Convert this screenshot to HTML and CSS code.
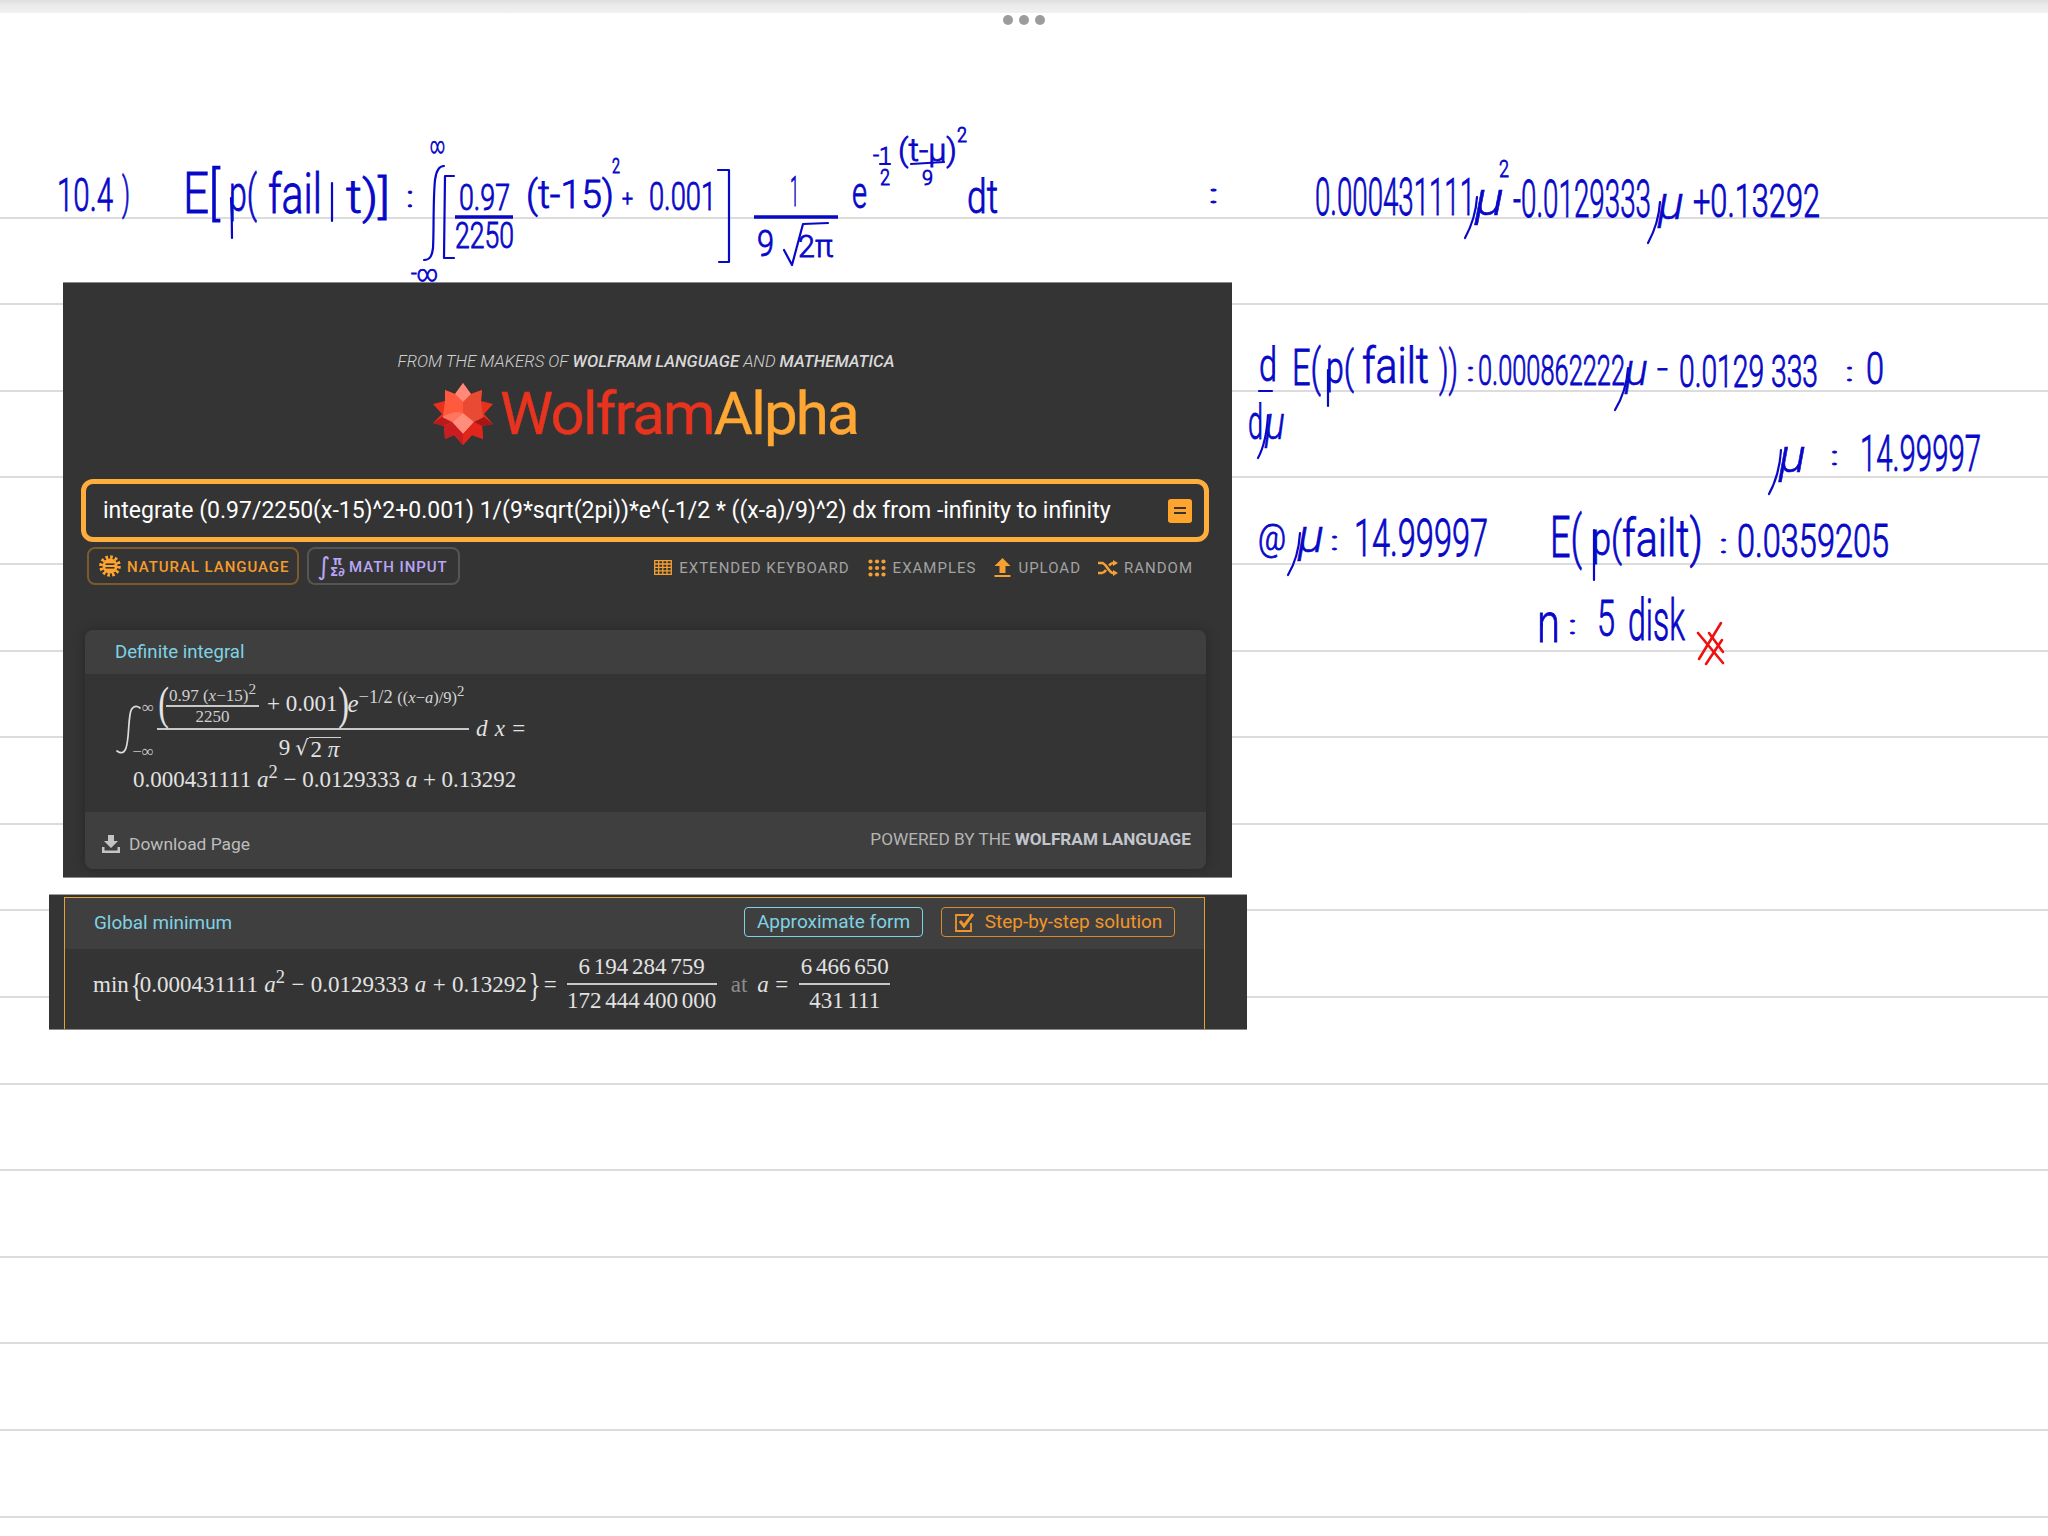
FILE: index.html
```html
<!DOCTYPE html>
<html lang="en">
<head>
<meta charset="utf-8">
<title>Notes</title>
<link rel="stylesheet" href="styles.css">
</head>
<body>
<main class="page">
  <div class="topbar"></div>
  <div class="dots"><i></i><i></i><i></i></div>
  <div class="rules">
    <div class="rule"></div><div class="rule"></div><div class="rule"></div><div class="rule"></div>
    <div class="rule"></div><div class="rule"></div><div class="rule"></div><div class="rule"></div>
    <div class="rule"></div><div class="rule"></div><div class="rule"></div><div class="rule"></div>
    <div class="rule"></div><div class="rule"></div><div class="rule"></div><div class="rule"></div>
  </div>

  <section class="shot shot-one">
    <p class="tagline">FROM THE MAKERS OF <b>WOLFRAM LANGUAGE</b> AND <b>MATHEMATICA</b></p>
    <div class="logo">
      <svg class="spikey" viewBox="-31 -31 62 62">
        <polygon fill="#e8301c" points="0,-31 8,-20 19,-24 18,-13 30,-10 21,0 30,10 19,12 20,25 9,21 0,31 -9,21 -18,25 -19,12 -30,9 -21,0 -30,-10 -18,-13 -18,-24 -8,-20"/>
        <polygon fill="#ff5a3e" points="-18,-24 -8,-20 0,-12 0,-1 -11,8 -19,12 -20,2 -18,-13"/>
        <polygon fill="#e84a32" points="19,-24 8,-20 0,-12 0,-1 11,8 19,12 20,2 18,-13"/>
        <polygon fill="#ff8a78" points="0,-31 -8,-20 0,-12 8,-20"/>
        <polygon fill="#ff8d7c" points="0,-1 -11,8 0,20 11,8"/>
        <polygon fill="#ff7560" points="-19,12 -11,8 0,-1 -8,-2 -20,2"/>
        <polygon fill="#c81e22" points="-19,12 -11,8 0,20 0,31 -9,21 -18,25"/>
        <polygon fill="#e0261a" points="19,12 11,8 0,20 0,31 9,21 20,25"/>
        <polygon fill="#b91a1c" points="-30,9 -19,12 -11,8 -21,3"/>
        <polygon fill="#a81518" points="30,10 19,12 11,8 21,3"/>
      </svg>
      <div class="wordmark"><span class="wm-red">Wolfram</span><span class="wm-orange">Alpha</span></div>
    </div>
    <div class="search">
      <span class="query">integrate (0.97/2250(x-15)^2+0.001) 1/(9*sqrt(2pi))*e^(-1/2 * ((x-a)/9)^2) dx from -infinity to infinity</span>
      <span class="go"><i></i><i></i></span>
    </div>
    <div class="toolbar">
      <div class="modes">
        <span class="mode mode-nl">
          <svg class="icon-sun" viewBox="-11 -11 22 22">
            <circle r="7.5" fill="#ffa52e"/>
            <circle r="9" fill="none" stroke="#ffa52e" stroke-width="3.6" stroke-dasharray="2.6 2.1"/>
            <rect x="-4.5" y="-2.6" width="9" height="1.6" fill="#343434"/>
            <rect x="-4.5" y="1" width="9" height="1.6" fill="#343434"/>
          </svg>
          NATURAL LANGUAGE
        </span>
        <span class="mode mode-math">
          <span class="math-icon"><span class="mi-int">∫</span><span class="mi-stack"><span>π</span><span>Σ∂</span></span></span>
          MATH INPUT
        </span>
      </div>
      <nav class="links">
        <span class="link link-kb">
          <svg class="ic" width="18" height="15" viewBox="0 0 18 15"><path fill="none" stroke="#f5a033" stroke-width="1.3" d="M.7.7h16.6v13.6H.7zM.7 4h16.6M.7 7.4h16.6M.7 10.8h16.6M4.7.7v13.6M8.8.7v13.6M13 .7v13.6"/></svg>
          EXTENDED KEYBOARD
        </span>
        <span class="link link-ex">
          <svg class="ic" width="18" height="18" viewBox="0 0 18 18" fill="#f5a033"><circle cx="2.5" cy="2.5" r="2.1"/><circle cx="9" cy="2.5" r="2.1"/><circle cx="15.5" cy="2.5" r="2.1"/><circle cx="2.5" cy="9" r="2.1"/><circle cx="9" cy="9" r="2.1"/><circle cx="15.5" cy="9" r="2.1"/><circle cx="2.5" cy="15.5" r="2.1"/><circle cx="9" cy="15.5" r="2.1"/><circle cx="15.5" cy="15.5" r="2.1"/></svg>
          EXAMPLES
        </span>
        <span class="link link-up">
          <svg class="ic" width="17" height="19" viewBox="0 0 17 19" fill="#f5a033"><path d="M8.5 0 16.5 8H11.5V15H5.5V8H.5z"/><rect x="0.5" y="17" width="16" height="2"/></svg>
          UPLOAD
        </span>
        <span class="link link-rnd">
          <svg class="ic" width="20" height="16" viewBox="0 0 20 16"><path fill="none" stroke="#f5a033" stroke-width="2.6" d="M0 3h4c4 0 7 10 11 10h2M0 13h4c1.600 0 3-1.500 4-3M11 5.500C12.500 4 13.500 3 15 3h2"/><path fill="#f5a033" d="M15 0l5 3-5 3zM15 10l5 3-5 3z"/></svg>
          RANDOM
        </span>
      </nav>
    </div>

    <article class="pod">
      <header class="pod-head">Definite integral</header>
      <div class="pod-body">
        <div class="integral-row math">
          <svg class="int-sign" width="26" height="50" viewBox="0 0 26 50"><path fill="none" stroke="#dcdcdc" stroke-width="1.700" stroke-linecap="round" d="M25 3c-4-3-9-2-10 7-2 12-1 24-4 33-1.500 5-5 6-9 3"/></svg>
          <span class="limits"><span>∞</span><span>−∞</span></span>
          <span class="frac frac-main">
            <span class="num num-main">
              <span class="paren">(</span>
              <span class="frac frac-small"><span class="num"><span>0.97 (<em>x</em>−15)<sup>2</sup></span></span><span class="den">2250</span></span>
              <span class="plus">+ 0.001</span>
              <span class="paren">)</span>
              <em class="e">e</em><span class="exp">−1/2 <small>((<em>x</em>−<em>a</em>)/9)</small><sup>2</sup></span>
            </span>
            <span class="den den-main">9 <span class="root">√</span><span class="radicand">2 <em>π</em></span></span>
          </span>
          <span class="dx"><em>d x</em> =</span>
        </div>
        <div class="result math">0.000431111 <em>a</em><sup>2</sup> − 0.0129333 <em>a</em> + 0.13292</div>
      </div>
      <footer class="pod-foot">
        <span class="download">
          <svg width="18" height="18" viewBox="0 0 18 18" fill="#c4c4c4"><path d="M6 0h6v6h4L9 13 2 6h4zM0 12h2.500v3.500h13V12H18v6H0z"/></svg>
          Download Page
        </span>
        <span class="powered">POWERED BY THE <b>WOLFRAM LANGUAGE</b></span>
      </footer>
    </article>
  </section>

  <section class="shot shot-two">
    <div class="frame">
      <header class="frame-head">
        <span class="frame-title">Global minimum</span>
        <span class="btn btn-cyan">Approximate form</span>
        <span class="btn btn-orange">
          <svg width="22" height="22" viewBox="0 0 22 22"><path fill="none" stroke="#f0962a" stroke-width="1.800" d="M17 12v8H2V4h13"/><path fill="none" stroke="#f0962a" stroke-width="3" d="M6 10l4 5 9-12"/></svg>
          Step-by-step solution
        </span>
      </header>
      <div class="frame-body math">
        <span>min</span><span class="brace">{</span><span>0.000431111 <em>a</em><sup>2</sup> − 0.0129333 <em>a</em> + 0.13292</span><span class="brace">}</span>
        <span class="eq">=</span>
        <span class="frac frac-wide"><span class="num">6 194 284 759</span><span class="den">172 444 400 000</span></span>
        <span class="at">at</span>
        <span class="a-eq"><em>a</em> =</span>
        <span class="frac frac-narrow"><span class="num">6 466 650</span><span class="den">431 111</span></span>
      </div>
    </div>
  </section>

  <svg class="ink" width="2048" height="1536" viewBox="0 0 2048 1536">
    <!-- first line -->
    <text x="57" y="211" font-size="46" textLength="56" lengthAdjust="spacingAndGlyphs">10.4</text>
    <text x="122" y="209" font-size="44" textLength="8" lengthAdjust="spacingAndGlyphs">)</text>
    <text x="183" y="213" font-size="58" textLength="37" lengthAdjust="spacingAndGlyphs">E[</text>
    <text x="229" y="211" font-size="50" textLength="28" lengthAdjust="spacingAndGlyphs">p(</text>
    <text x="268" y="213" font-size="56" textLength="54" lengthAdjust="spacingAndGlyphs">fail</text>
    <text x="346" y="213" font-size="46" textLength="44" lengthAdjust="spacingAndGlyphs">t)]</text>
    <text x="406" y="207" font-size="30" textLength="8" lengthAdjust="spacingAndGlyphs">:</text>
    <text x="430" y="153" font-size="22" textLength="15" lengthAdjust="spacingAndGlyphs">∞</text>
    <text x="411" y="281" font-size="22" textLength="27" lengthAdjust="spacingAndGlyphs">-∞</text>
    <text x="459" y="210" font-size="36" textLength="51" lengthAdjust="spacingAndGlyphs">0.97</text>
    <text x="455" y="248" font-size="36" textLength="59" lengthAdjust="spacingAndGlyphs">2250</text>
    <text x="526" y="208" font-size="38" textLength="88" lengthAdjust="spacingAndGlyphs">(t-15)</text>
    <text x="612" y="173" font-size="20" textLength="8" lengthAdjust="spacingAndGlyphs">2</text>
    <text x="622" y="206" font-size="22" textLength="11" lengthAdjust="spacingAndGlyphs">+</text>
    <text x="649" y="210" font-size="38" textLength="67" lengthAdjust="spacingAndGlyphs">0.001</text>
    <text x="790" y="206" font-size="42" textLength="9" lengthAdjust="spacingAndGlyphs">1</text>
    <text x="757" y="256" font-size="36" textLength="17" lengthAdjust="spacingAndGlyphs">9</text>
    <text x="798" y="257" font-size="32" textLength="35" lengthAdjust="spacingAndGlyphs">2π</text>
    <text x="852" y="208" font-size="44" textLength="15" lengthAdjust="spacingAndGlyphs">e</text>
    <text x="873" y="163" font-size="22" textLength="18" lengthAdjust="spacingAndGlyphs">-1</text>
    <text x="880" y="185" font-size="22" textLength="10" lengthAdjust="spacingAndGlyphs">2</text>
    <text x="898" y="161" font-size="32" textLength="59" lengthAdjust="spacingAndGlyphs">(t-μ)</text>
    <text x="922" y="185" font-size="20" textLength="11" lengthAdjust="spacingAndGlyphs">9</text>
    <text x="957" y="142" font-size="20" textLength="10" lengthAdjust="spacingAndGlyphs">2</text>
    <text x="967" y="213" font-size="46" textLength="31" lengthAdjust="spacingAndGlyphs">dt</text>
    <!-- first line, result -->
    <text x="1208" y="203" font-size="26" textLength="11" lengthAdjust="spacingAndGlyphs">:</text>
    <text x="1315" y="215" font-size="52" textLength="160" lengthAdjust="spacingAndGlyphs">0.000431111</text>
    <text class="mu" x="1475" y="215" font-size="48" textLength="29" lengthAdjust="spacingAndGlyphs">μ</text>
    <text x="1499" y="177" font-size="24" textLength="10" lengthAdjust="spacingAndGlyphs">2</text>
    <text x="1513" y="217" font-size="52" textLength="138" lengthAdjust="spacingAndGlyphs">-0.0129333</text>
    <text class="mu" x="1658" y="219" font-size="46" textLength="26" lengthAdjust="spacingAndGlyphs">μ</text>
    <text x="1693" y="217" font-size="46" textLength="127" lengthAdjust="spacingAndGlyphs">+0.13292</text>
    <!-- derivative -->
    <text x="1259" y="381" font-size="46" textLength="18" lengthAdjust="spacingAndGlyphs">d</text>
    <text x="1248" y="439" font-size="48" textLength="15" lengthAdjust="spacingAndGlyphs">d</text>
    <text class="mu" x="1265" y="439" font-size="46" textLength="20" lengthAdjust="spacingAndGlyphs">μ</text>
    <text x="1292" y="385" font-size="50" textLength="29" lengthAdjust="spacingAndGlyphs">E(</text>
    <text x="1326" y="383" font-size="44" textLength="28" lengthAdjust="spacingAndGlyphs">p(</text>
    <text x="1362" y="383" font-size="50" textLength="67" lengthAdjust="spacingAndGlyphs">failt</text>
    <text x="1439" y="385" font-size="48" textLength="19" lengthAdjust="spacingAndGlyphs">))</text>
    <text x="1466" y="381" font-size="26" textLength="9" lengthAdjust="spacingAndGlyphs">:</text>
    <text x="1478" y="385" font-size="42" textLength="147" lengthAdjust="spacingAndGlyphs">0.000862222</text>
    <text class="mu" x="1625" y="385" font-size="44" textLength="23" lengthAdjust="spacingAndGlyphs">μ</text>
    <text x="1657" y="380" font-size="34" textLength="11" lengthAdjust="spacingAndGlyphs">-</text>
    <text x="1679" y="387" font-size="44" textLength="139" lengthAdjust="spacingAndGlyphs">0.0129 333</text>
    <text x="1845" y="381" font-size="26" textLength="9" lengthAdjust="spacingAndGlyphs">:</text>
    <text x="1866" y="384" font-size="44" textLength="18" lengthAdjust="spacingAndGlyphs">0</text>
    <!-- mu value -->
    <text class="mu" x="1779" y="472" font-size="48" textLength="27" lengthAdjust="spacingAndGlyphs">μ</text>
    <text x="1830" y="465" font-size="26" textLength="9" lengthAdjust="spacingAndGlyphs">:</text>
    <text x="1860" y="471" font-size="50" textLength="121" lengthAdjust="spacingAndGlyphs">14.99997</text>
    <!-- at mu -->
    <text x="1258" y="550" font-size="36" textLength="28" lengthAdjust="spacingAndGlyphs">@</text>
    <text class="mu" x="1298" y="552" font-size="46" textLength="26" lengthAdjust="spacingAndGlyphs">μ</text>
    <text x="1330" y="550" font-size="26" textLength="9" lengthAdjust="spacingAndGlyphs">:</text>
    <text x="1354" y="556" font-size="52" textLength="134" lengthAdjust="spacingAndGlyphs">14.99997</text>
    <text x="1550" y="557" font-size="58" textLength="32" lengthAdjust="spacingAndGlyphs">E(</text>
    <text x="1592" y="555" font-size="46" textLength="30" lengthAdjust="spacingAndGlyphs">p(</text>
    <text x="1622" y="556" font-size="52" textLength="81" lengthAdjust="spacingAndGlyphs">failt)</text>
    <text x="1719" y="553" font-size="26" textLength="9" lengthAdjust="spacingAndGlyphs">:</text>
    <text x="1737" y="557" font-size="46" textLength="152" lengthAdjust="spacingAndGlyphs">0.0359205</text>
    <!-- n -->
    <text x="1537" y="642" font-size="56" textLength="23" lengthAdjust="spacingAndGlyphs">n</text>
    <text x="1568" y="634" font-size="26" textLength="9" lengthAdjust="spacingAndGlyphs">:</text>
    <text x="1597" y="636" font-size="50" textLength="18" lengthAdjust="spacingAndGlyphs">5</text>
    <text x="1628" y="640" font-size="58" textLength="57" lengthAdjust="spacingAndGlyphs">disk</text>
    <!-- strokes that are not letters -->
    <g class="stroke">
      <path d="M444 166c-6 0-8 6-9 14-2 20-1 50-2 68-1 8-3 12-9 12"/>
      <path d="M454 176h-9l-1 82h10"/>
      <path d="M718 170h11v92h-10"/>
      <path d="M332 183v38"/>
      <path d="M231 198c1 20 1 20 1 40"/>
      <path d="M1259 391h13"/>
      <path d="M911 164l33-2"/>
      <path d="M880 164h10"/>
      <path d="M784 250l8 15 11-41 25-1"/>
      <path d="M1477 197c-1 16-6 30-12 41"/>
      <path d="M1660 202c-1 16-6 30-12 41"/>
      <path d="M1268 415c-1 16-4 32-10 43"/>
      <path d="M1628 368c-1 16-7 32-13 42"/>
      <path d="M1781 450c-1 16-6 33-12 44"/>
      <path d="M1300 533c-1 16-6 32-12 42"/>
      <path d="M1328 370v36"/>
      <path d="M1594 530v50"/>
    </g>
    <path class="bar" d="M455 217h58"/>
    <path class="bar" d="M754 217h84"/>
    <g class="red">
      <path d="M1721 623 1699 659"/>
      <path d="M1698 633 1723 663"/>
      <path d="M1709 633 1723 652"/>
      <path d="M1722 640 1706 664"/>
    </g>
  </svg>
</main>
</body>
</html>
```

FILE: styles.css
```css
* { box-sizing: border-box; }
html, body { margin: 0; padding: 0; background: #fff; }
.page {
  position: relative;
  width: 2048px;
  height: 1536px;
  overflow: hidden;
  background: #fff;
  font-family: Roboto, "Liberation Sans", sans-serif;
}
.topbar {
  height: 13px;
  background: linear-gradient(#dedede, #eaeaea 40%, #f1f1f1);
}
.dots {
  position: absolute;
  top: 15px;
  left: 1003px;
  display: flex;
  gap: 6px;
}
.dots i {
  width: 10px;
  height: 10px;
  border-radius: 50%;
  background: #9c9c9c;
}
.rules { padding-top: 119px; }
.rule {
  height: 86.6px;
  border-bottom: 2px solid #dcdcdc;
}

/* Pasted screenshots */
.shot {
  position: absolute;
  background: #343434;
  color: #e4e4e4;
}
.shot-one {
  left: 63px;
  top: 282px;
  width: 1169px;
  height: 596px;
  border-top: 1px solid #8a8a8a;
  border-bottom: 1px solid #8a8a8a;
  overflow: hidden;
}
.shot-two {
  left: 49px;
  top: 894px;
  width: 1198px;
  height: 136px;
  padding: 2px 42px 0 15px;
  border-top: 1px solid #a0a0a0;
  border-bottom: 1px solid #8a8a8a;
}

/* Header */
.tagline {
  margin: 67px 0 0;
  padding-right: 3px;
  height: 22px;
  line-height: 22px;
  text-align: center;
  font-size: 16.8px;
  font-style: italic;
  font-weight: 300;
  color: #d0d0d0;
}
.tagline b { font-weight: 500; color: #d8d8d8; }
.logo {
  margin: 11px 0 0 369px;
  height: 62px;
  display: flex;
  align-items: center;
  gap: 6px;
}
.spikey { width: 62px; height: 62px; flex: none; }
.wordmark {
  font-size: 60px;
  line-height: 62px;
  font-weight: 400;
  letter-spacing: -1.8px;
  -webkit-text-stroke: .4px currentColor;
}
.wm-red { color: #e8331f; }
.wm-orange { color: #ffa733; }

/* Search */
.search {
  margin: 34px 23px 0 18px;
  height: 63px;
  border: 5px solid #ffae3e;
  border-radius: 12px;
  display: flex;
  align-items: center;
  justify-content: space-between;
  padding: 0 12px 0 17px;
}
.query { font-size: 23px; color: #fff; white-space: nowrap; }
.go {
  width: 24px;
  height: 24px;
  border-radius: 3px;
  background: #ffa52e;
  display: flex;
  flex-direction: column;
  align-items: center;
  justify-content: center;
  gap: 3px;
}
.go i { width: 12px; height: 2px; background: #343434; }

/* Toolbar */
.toolbar {
  margin: 5px 39px 0 24px;
  height: 38px;
  display: flex;
  justify-content: space-between;
  align-items: center;
}
.modes { display: flex; gap: 8px; }
.mode {
  height: 38px;
  border-radius: 8px;
  border: 2px solid;
  display: flex;
  align-items: center;
  font-size: 15px;
  font-weight: 500;
  letter-spacing: .95px;
  white-space: nowrap;
}
.mode-nl {
  width: 212px;
  border-color: #7c5a2c;
  color: #f59d2c;
  padding: 2px 0 0 10px;
  gap: 6px;
}
.icon-sun { width: 22px; height: 22px; flex: none; position: relative; top: -1px; }
.mode-math {
  width: 153px;
  border-color: #555;
  color: #b9a6f7;
  padding: 1px 0 0 8px;
  gap: 5px;
}
.math-icon {
  display: flex;
  align-items: center;
  width: 27px;
  font-family: "DejaVu Sans", sans-serif;
  letter-spacing: 0;
  color: #b9a6f7;
}
.mi-int { font-size: 25px; line-height: 25px; }
.mi-stack {
  display: flex;
  flex-direction: column;
  align-items: center;
  font-size: 12px;
  line-height: 11px;
  font-weight: 700;
}
.links {
  display: flex;
  align-items: center;
  font-size: 15px;
  letter-spacing: 1px;
  color: #a2a2a2;
  white-space: nowrap;
  padding-top: 3px;
}
.link { display: flex; align-items: center; gap: 7px; }
.link-ex { margin-left: 18px; }
.link-up { margin-left: 18px; }
.link-rnd { margin-left: 17px; gap: 6px; }
.ic { flex: none; }

/* Pods */
.pod {
  margin: 45px 26px 0 22px;
  border-radius: 8px;
  overflow: hidden;
  box-shadow: 0 0 12px rgba(0, 0, 0, .25);
}
.pod-head {
  height: 44px;
  background: #3f3f3f;
  color: #7fd2e4;
  font-size: 18.6px;
  line-height: 45px;
  padding-left: 30px;
}
.pod-body {
  height: 138px;
  background: #343434;
  padding: 3px 0 0 30px;
}
.pod-foot {
  height: 57px;
  background: #3f3f3f;
  display: flex;
  justify-content: space-between;
  padding: 0 15px 0 17px;
  color: #bdbdbd;
}
.download {
  display: flex;
  align-items: center;
  gap: 9px;
  font-size: 17.4px;
  padding-top: 7px;
}
.powered {
  display: flex;
  align-items: center;
  gap: 4px;
  font-size: 17.2px;
  padding-bottom: 3px;
  color: #b4b4b4;
}
.powered b { font-weight: 700; color: #c2c6cc; }

/* Math */
.math {
  font-family: "Liberation Serif", serif;
  color: #e2e2e2;
  font-size: 23px;
  white-space: nowrap;
}
.math em { font-style: italic; }
.math sup { font-size: .8em; line-height: 0; }
.integral-row { display: flex; align-items: center; height: 86px; }
.int-sign {
  flex: none;
  margin: 20px -10px 0 0;
  overflow: visible;
}
.limits {
  display: flex;
  flex-direction: column;
  justify-content: space-between;
  align-items: flex-end;
  height: 62px;
  width: 23px;
  margin-top: 20px;
  font-size: 17px;
  line-height: 18px;
  color: #c8c8c8;
}
.frac {
  display: inline-flex;
  flex-direction: column;
  align-items: center;
}
.frac > .num {
  border-bottom: 2px solid #c8c8c8;
  width: 100%;
  display: flex;
  justify-content: center;
  align-items: center;
}
.frac > .den { display: flex; justify-content: center; }
.frac-main { width: 312px; margin: 3px 0 0 3px; }
.frac > .num-main { height: 50px; justify-content: flex-start; }
.paren {
  font-size: 46px;
  line-height: 46px;
  transform: scaleX(.7);
  width: 9px;
  text-align: center;
}
.frac-small {
  font-size: 17px;
  width: 93px;
  margin: 3px 0 0 0;
  line-height: 19px;
  color: #cfcfcf;
}
.frac-small sup { font-size: .9em; }
.plus { margin-left: 8px; }
.e { margin-left: 1px; font-size: 25px; }
.exp {
  font-size: 18.5px;
  align-self: flex-start;
  margin-top: 7px;
  color: #d4d4d4;
}
.exp small { font-size: 16.5px; }
.frac > .den-main {
  height: 33px;
  align-items: center;
  padding: 3px 6px 0 0;
  line-height: 30px;
}
.root { margin-left: 5px; font-family: "DejaVu Sans", sans-serif; font-size: 21px; }
.radicand {
  border-top: 1.500px solid #d0d0d0;
  line-height: 24px;
  height: 26px;
  margin-top: 3px;
  padding: 0 2px;
}
.dx { margin-left: 7px; margin-top: 18px; word-spacing: 1.5px; }
.result { margin-left: 18px; line-height: 34px; }

/* Second screenshot */
.frame {
  height: 100%;
  border: 1.500px solid #e8a030;
  border-bottom: 0;
}
.frame-head {
  height: 51px;
  background: #3f3f3f;
  display: flex;
  align-items: center;
  padding: 0 29px 0 28px;
}
.frame-title {
  color: #7fd2e4;
  font-size: 18.9px;
  margin: 0 auto 3px 1px;
}
.btn {
  height: 30px;
  border: 1px solid;
  border-radius: 4px;
  display: flex;
  align-items: center;
  justify-content: center;
  font-size: 19px;
  white-space: nowrap;
  position: relative;
  top: -2px;
}
.btn-cyan { width: 179px; color: #7fd2e4; border-color: #7fd2e4; margin-right: 18px; }
.btn-orange { width: 234px; color: #f0962a; border-color: #d98a2a; gap: 9px; }
.frame-body {
  display: flex;
  align-items: center;
  height: 80px;
  padding: 0 0 9px 28px;
  word-spacing: .6px;
}
.brace {
  font-size: 34px;
  line-height: 34px;
  font-weight: 300;
  transform: scaleX(.75);
  width: 11px;
  text-align: center;
}
.eq { margin: 0 10px 0 6px; }
.frac-wide { width: 150px; }
.frac-narrow { width: 91px; }
.frac-wide .num, .frac-narrow .num, .frac-wide .den, .frac-narrow .den {
  height: 34px;
  line-height: 32px;
  word-spacing: -2px;
}
.at { color: #8c8c8c; margin: 0 10px 0 14px; }
.a-eq { margin-right: 11px; }

/* Handwritten ink over the page */
.ink {
  position: absolute;
  left: 0;
  top: 0;
  pointer-events: none;
}
.ink text {
  font-family: Roboto, "Liberation Sans", sans-serif;
  font-weight: 300;
  fill: #0808c8;
  stroke: #0808c8;
  stroke-width: .9px;
}
.ink .mu { font-style: italic; stroke-width: .6px; }
.ink .stroke path {
  fill: none;
  stroke: #0808c8;
  stroke-width: 2.200px;
  stroke-linecap: round;
  stroke-linejoin: round;
}
.ink .bar { fill: none; stroke: #0808c8; stroke-width: 3.500px; }
.ink .red path { fill: none; stroke: #f01010; stroke-width: 2.600px; stroke-linecap: round; }
```
